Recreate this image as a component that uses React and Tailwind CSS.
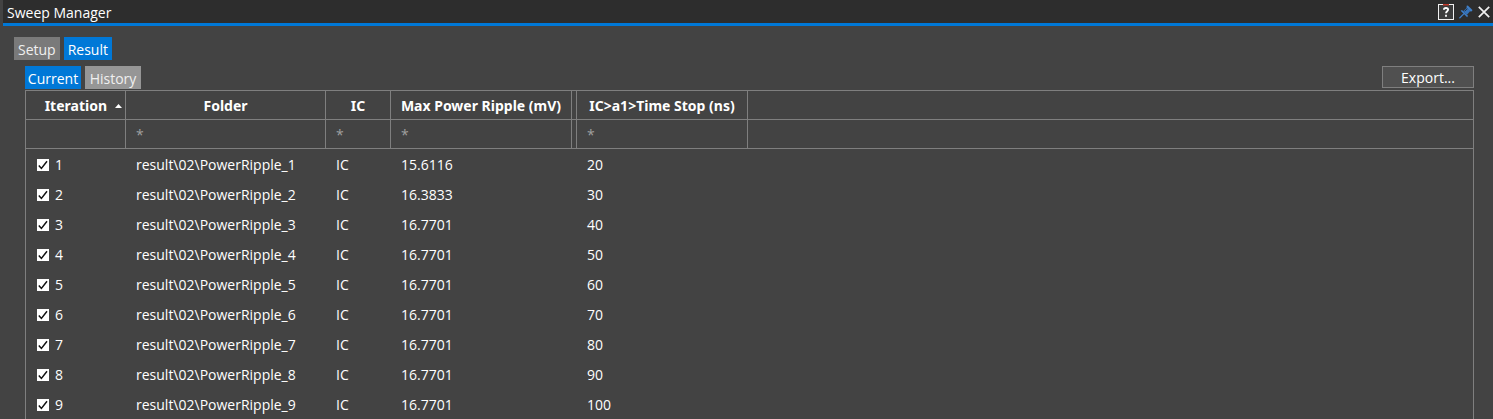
import React, { useState } from 'react';
import clsx from 'clsx';

const initialRows = [
  { id: 1, folder: 'result\\02\\PowerRipple_1', ic: 'IC', ripple: '15.6116', timeStop: 20 },
  { id: 2, folder: 'result\\02\\PowerRipple_2', ic: 'IC', ripple: '16.3833', timeStop: 30 },
  { id: 3, folder: 'result\\02\\PowerRipple_3', ic: 'IC', ripple: '16.7701', timeStop: 40 },
  { id: 4, folder: 'result\\02\\PowerRipple_4', ic: 'IC', ripple: '16.7701', timeStop: 50 },
  { id: 5, folder: 'result\\02\\PowerRipple_5', ic: 'IC', ripple: '16.7701', timeStop: 60 },
  { id: 6, folder: 'result\\02\\PowerRipple_6', ic: 'IC', ripple: '16.7701', timeStop: 70 },
  { id: 7, folder: 'result\\02\\PowerRipple_7', ic: 'IC', ripple: '16.7701', timeStop: 80 },
  { id: 8, folder: 'result\\02\\PowerRipple_8', ic: 'IC', ripple: '16.7701', timeStop: 90 },
  { id: 9, folder: 'result\\02\\PowerRipple_9', ic: 'IC', ripple: '16.7701', timeStop: 100 },
];

const HelpIcon = () => (
  <svg className="w-4 h-4" viewBox="0 0 16 16">
    <rect x="0.5" y="0.5" width="15" height="15" fill="#3c3c3c" stroke="#f0f0f0" />
    <rect x="5" y="0" width="6" height="1.5" fill="#c0392b" />
    <path
      d="M5.9 5.8C5.9 4.6 6.7 4 8 4s2.1.7 2.1 1.8c0 1.5-2.1 1.5-2.1 3.4M8 10.8v1.9"
      fill="none"
      stroke="#fff"
      strokeWidth="1.8"
    />
  </svg>
);

const PinIcon = () => (
  <svg className="w-3.5 h-3.5" viewBox="0 0 14 14">
    <path d="M0.4 13.2 5 8.6" stroke="#3f7fc8" strokeWidth="1.3" />
    <path d="M1.6 5.8 3 5 9 10.8 8.2 12.2Z" fill="#3f7fc8" />
    <path d="M4 6.2 8 2.8 11.2 6 8 9.8Z" fill="#3573bb" />
    <path d="M7.6 0.8 8.8 0.4 13.4 5 13 6.2 11.4 6.4 7.6 2.4Z" fill="#3f7fc8" />
    <path d="M5.6 6.2 8.4 3.8" stroke="#242c36" strokeWidth="0.9" />
  </svg>
);

const CloseIcon = () => (
  <svg className="w-3 h-3" viewBox="0 0 12 12">
    <path d="M0.8 0.8 11.2 11.2M11.2 0.8 0.8 11.2" stroke="#f0f0f0" strokeWidth="1.7" />
  </svg>
);

const Tab = ({ label, active, onClick, idle, size }) => (
  <button
    role="tab"
    aria-selected={active}
    onClick={onClick}
    className={clsx('h-[23px] pt-0.5 leading-5', size, active ? 'bg-[#0078d7] text-white' : idle)}
  >
    {label}
  </button>
);

const FilterCell = ({ label }) => (
  <td className="h-[29px] p-0 border-r border-b border-[#7f7f7f]">
    <input
      type="text"
      placeholder="*"
      aria-label={`Filter ${label}`}
      className="block w-full h-7 px-2.5 bg-transparent outline-none placeholder:text-[#a0a0a0]"
    />
  </td>
);

const headCell =
  "h-[29px] px-0 pt-0.5 pb-0 border-r border-b border-[#7f7f7f] font-['Noto_Sans',sans-serif] font-bold whitespace-nowrap";
const bodyCell = 'h-[30px] pt-0.5 pb-0 px-2.5 whitespace-nowrap';

export default function App() {
  const [page, setPage] = useState('Result');
  const [view, setView] = useState('Current');
  const [checked, setChecked] = useState(initialRows.map((row) => row.id));

  const toggle = (id) => {
    setChecked((prev) => (prev.includes(id) ? prev.filter((x) => x !== id) : [...prev, id]));
  };

  return (
    <div className="min-h-screen pl-[3px] bg-[#434343] text-white text-[14px] leading-5 font-['Open_Sans',sans-serif]">
      <header className="flex items-center justify-between h-[26px] pl-1 pr-[3px] bg-[#2d2d2d] border-b-3 border-[#0078d7]">
        <h1 className="pt-0.5">Sweep Manager</h1>
        <div className="flex items-center gap-[5px]">
          <button aria-label="Help"><HelpIcon /></button>
          <button aria-label="Pin"><PinIcon /></button>
          <button aria-label="Close"><CloseIcon /></button>
        </div>
      </header>

      <main className="pt-[11px] pl-[11px] pr-[19px]">
        <div role="tablist" className="flex gap-1">
          {['Setup', 'Result'].map((name) => (
            <Tab
              key={name}
              label={name}
              active={page === name}
              size="px-1"
              idle="bg-[#7a7a7a] text-[#f0f0f0]"
              onClick={() => setPage(name)}
            />
          ))}
        </div>

        <section className="pt-1.5 pl-[11px]">
          <div className="flex justify-between h-6">
            <div role="tablist" className="flex gap-1">
              {['Current', 'History'].map((name) => (
                <Tab
                  key={name}
                  label={name}
                  active={view === name}
                  size="w-14"
                  idle="bg-[#969696] text-[#f0f0f0]"
                  onClick={() => setView(name)}
                />
              ))}
            </div>
            <button className="w-[92px] h-[22px] pt-px bg-[#505050] border border-[#7f7f7f]">Export...</button>
          </div>

          <table className="w-full table-fixed border-separate border-spacing-0 border-t border-x border-[#7f7f7f]">
            <colgroup>
              <col className="w-[100px]" />
              <col className="w-[200px]" />
              <col className="w-[65px]" />
              <col className="w-[181px]" />
              <col className="w-[5px]" />
              <col className="w-[171px]" />
              <col />
            </colgroup>
            <thead>
              <tr>
                <th className={headCell} aria-sort="ascending">
                  <div className="flex items-center justify-end gap-2 pr-[3px]">
                    Iteration
                    <svg className="w-[7px] h-1" viewBox="0 0 7 4">
                      <path d="M0 4 3.5 0 7 4Z" fill="#fff" />
                    </svg>
                  </div>
                </th>
                <th className={headCell}>Folder</th>
                <th className={headCell}>IC</th>
                <th className={headCell}>Max Power Ripple (mV)</th>
                <td className={headCell} />
                <th className={headCell}>IC&gt;a1&gt;Time Stop (ns)</th>
                <td className="border-b border-[#7f7f7f]" />
              </tr>
              <tr>
                <td className={headCell} />
                <FilterCell label="Folder" />
                <FilterCell label="IC" />
                <FilterCell label="Max Power Ripple" />
                <td className={headCell} />
                <FilterCell label="Time Stop" />
                <td className="border-b border-[#7f7f7f]" />
              </tr>
            </thead>
            <tbody>
              {initialRows.map((row) => (
                <tr key={row.id}>
                  <td className="h-[30px] pt-0.5 pb-0 pl-[11px]">
                    <label className="flex items-center gap-1.5">
                      <span className="grid w-3 h-3 bg-white">
                        <input
                          type="checkbox"
                          checked={checked.includes(row.id)}
                          onChange={() => toggle(row.id)}
                          className="peer appearance-none col-start-1 row-start-1 w-3 h-3"
                        />
                        <svg
                          className="hidden peer-checked:block col-start-1 row-start-1 w-3 h-3 pointer-events-none"
                          viewBox="0 0 12 12"
                        >
                          <path d="M1.8 6.4 4.4 9.4 10 2.2" fill="none" stroke="#111" strokeWidth="1.5" />
                        </svg>
                      </span>
                      {row.id}
                    </label>
                  </td>
                  <td className={bodyCell}>{row.folder}</td>
                  <td className={bodyCell}>{row.ic}</td>
                  <td className={bodyCell}>{row.ripple}</td>
                  <td />
                  <td className={bodyCell}>{row.timeStop}</td>
                  <td />
                </tr>
              ))}
            </tbody>
          </table>
        </section>
      </main>
    </div>
  );
}
